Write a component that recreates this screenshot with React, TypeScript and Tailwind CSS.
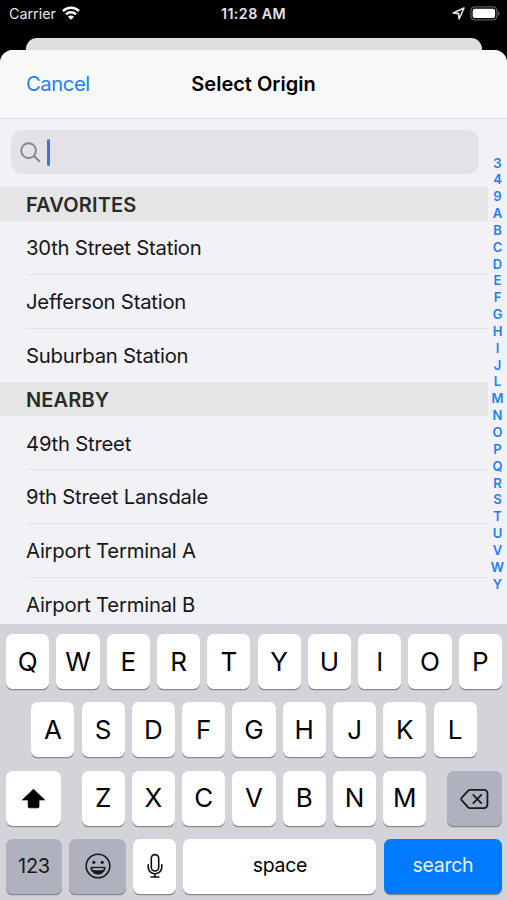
import type { ReactNode } from 'react'

interface Section {
  title: string
  stations: string[]
}

const sections: Section[] = [
  { title: 'FAVORITES', stations: ['30th Street Station', 'Jefferson Station', 'Suburban Station'] },
  { title: 'NEARBY', stations: ['49th Street', '9th Street Lansdale', 'Airport Terminal A', 'Airport Terminal B'] },
]

const indexLetters = '349ABCDEFGHIJLMNOPQRSTUVWY'.split('')

function StatusBar() {
  return (
    <div className="grid h-[28px] shrink-0 grid-cols-3 items-center pl-[9px] pr-[7px] text-[14.3px] text-[#e4e4e4]">
      <div className="flex items-center gap-[6px]">
        <span>Carrier</span>
        <svg width="18" height="14" viewBox="0 0 18 14" fill="none" stroke="#fff" strokeWidth="2.5" className="-mt-[2px]">
          <path d="M1 5.1a11.3 11.3 0 0 1 16 0" />
          <path d="M4 8.4a7.1 7.1 0 0 1 10 0" />
          <path d="M9 13.8 5.9 10.7a4.4 4.4 0 0 1 6.2 0z" fill="#fff" stroke="none" />
        </svg>
      </div>
      <div className="-ml-[2px] text-center text-[14.2px] font-semibold tracking-[0.45px]">11:28 AM</div>
      <div className="flex items-center justify-end gap-[5px]">
        <svg width="13" height="13" viewBox="0 0 13 13" fill="none" stroke="#e4e4e4" strokeWidth="1.6" strokeLinejoin="round" className="-mt-[1px]">
          <path d="M12 1 1.2 5.9l5.3.7.6 5.4z" />
        </svg>
        <svg width="30" height="15" viewBox="0 0 30 15" fill="none" className="-mt-[2px]">
          <rect x="0.9" y="0.9" width="26" height="13" rx="3.8" stroke="#5c5c5c" strokeWidth="1.3" />
          <rect x="2.7" y="2.7" width="22.4" height="9.4" rx="2.2" fill="#fff" />
          <path d="M28 5.2c2 .8 2 3.8 0 4.6z" fill="#5c5c5c" />
        </svg>
      </div>
    </div>
  )
}

function StationList() {
  return (
    <div className="w-[488px]">
      {sections.map((section) => (
        <section key={section.title}>
          <h2 className="flex h-[34px] items-center bg-[#e5e5e5] pl-[26px] pt-[2px] text-[20px] font-semibold tracking-[0.15px] text-[#2a2a2c]">
            {section.title}
          </h2>
          {section.stations.map((name, i) => (
            <div key={name} className="h-[53.8px] pl-[26px]">
              <div
                className={
                  i < section.stations.length - 1
                    ? 'flex h-full items-center border-b border-[#e1e1e6] pt-[2px]'
                    : 'flex h-full items-center pt-[1px]'
                }
              >
                <span className="text-[20.3px] tracking-[-0.22px] text-[#161618]">{name}</span>
              </div>
            </div>
          ))}
        </section>
      ))}
    </div>
  )
}

function LetterKey({ children }: { children: ReactNode }) {
  return (
    <div className="flex h-[55px] w-[43.2px] items-center justify-center rounded-[6.5px] bg-white pb-[1px] text-[26px] shadow-[0_1.3px_0_#898a8d]">
      {children}
    </div>
  )
}

function Letters({ letters }: { letters: string }) {
  return (
    <div className="flex justify-center gap-[7.1px]">
      {letters.split('').map((l) => (
        <LetterKey key={l}>{l}</LetterKey>
      ))}
    </div>
  )
}

function Keyboard() {
  return (
    <div className="flex h-[276px] shrink-0 flex-col gap-[13.3px] bg-[#d3d4da] pl-[6px] pr-[5px] pt-[10px] text-black">
      <Letters letters="QWERTYUIOP" />
      <Letters letters="ASDFGHJKL" />
      <div className="flex justify-between">
        <div className="flex h-[55px] w-[55px] items-center justify-center rounded-[6.5px] bg-white shadow-[0_1.3px_0_#898a8d]">
          <svg width="25" height="21" viewBox="0 0 25 21" className="mt-[1px]">
            <path
              d="M12.5 1.2 23.6 11.9H18v6.6a1.3 1.3 0 0 1-1.3 1.3H8.5a1.3 1.3 0 0 1-1.3-1.3v-6.6H1.4z"
              fill="#000"
              stroke="#000"
              strokeWidth="0.8"
              strokeLinejoin="round"
            />
          </svg>
        </div>
        <Letters letters="ZXCVBNM" />
        <div className="flex h-[55px] w-[55px] items-center justify-center rounded-[6.5px] bg-[#afb2be] shadow-[0_1.3px_0_#898a8d]">
          <svg width="29" height="22" viewBox="0 0 30 22" fill="none" stroke="#17181c" strokeWidth="1.8" strokeLinecap="round" strokeLinejoin="round" className="mt-[1px]">
            <path d="M10.2 1.6H25a3.4 3.4 0 0 1 3.4 3.4v12a3.4 3.4 0 0 1-3.4 3.4H10.2a2.4 2.4 0 0 1-1.7-.7l-6.6-7.2a2.2 2.2 0 0 1 0-3l6.6-7.2a2.4 2.4 0 0 1 1.7-.7z" />
            <path d="m13.8 6.7 8.2 8.6M22 6.7l-8.2 8.6" />
          </svg>
        </div>
      </div>
      <div className="flex h-[55px] gap-[7.4px] text-[19.5px]">
        <div className="flex w-[56px] items-center justify-center rounded-[6.5px] bg-[#afb2be] text-[20px] tracking-[-0.3px] text-[#17181c] shadow-[0_1.3px_0_#898a8d]">
          123
        </div>
        <div className="flex w-[56.6px] items-center justify-center rounded-[6.5px] bg-[#afb2be] shadow-[0_1.3px_0_#898a8d]">
          <svg width="26" height="26" viewBox="0 0 26 26" fill="none" stroke="#17181c" strokeWidth="1.6" className="ml-[1px]">
            <circle cx="13" cy="13" r="11.8" />
            <circle cx="8.8" cy="9.3" r="1.6" fill="#17181c" stroke="none" />
            <circle cx="17.2" cy="9.3" r="1.6" fill="#17181c" stroke="none" />
            <path d="M5.9 14.3h14.2c0 4.2-3.1 6.8-7.1 6.8s-7.1-2.6-7.1-6.8z" fill="#17181c" strokeWidth="1" strokeLinejoin="round" />
            <path d="M7 15.2h12q-.4 1.500-1.400 1.800-4.600.7-9.200 0-1-.3-1.400-1.800z" fill="#b9bcc7" stroke="none" />
          </svg>
        </div>
        <div className="flex w-[42.6px] items-center justify-center rounded-[6.5px] bg-white shadow-[0_1.3px_0_#898a8d]">
          <svg width="16" height="26" viewBox="0 0 16 26" fill="none" stroke="#111" strokeWidth="1.6" strokeLinecap="round">
            <rect x="4.3" y="1.6" width="7.4" height="16.4" rx="3.7" />
            <path d="M1.2 11.8v2.5a6.8 6.4 0 0 0 13.6 0v-2.5M8 20.7v3.2M4 24h8" />
          </svg>
        </div>
        <div className="flex w-[193px] items-center justify-center rounded-[6.5px] bg-white pb-[2px] tracking-[-0.3px] shadow-[0_1.3px_0_#898a8d]">
          space
        </div>
        <div className="flex flex-1 items-center justify-center rounded-[6.5px] bg-[#007aff] pb-[2px] tracking-[-0.3px] text-[#e8f3ff] shadow-[0_1.3px_0_#898a8d]">
          search
        </div>
      </div>
    </div>
  )
}

export default function App() {
  return (
    <div className="flex h-[900px] w-[507px] flex-col overflow-hidden bg-black font-['Inter',sans-serif]">
      <StatusBar />
      {/* Edge of the sheet underneath */}
      <div className="ml-[26px] mr-[25px] mt-[10px] h-[12px] shrink-0 rounded-t-[11px] bg-[#dfdfdf]" />
      <div className="flex h-[574px] shrink-0 flex-col overflow-hidden rounded-t-[13px] bg-[#f1f1f6]">
        <header className="grid h-[69px] shrink-0 grid-cols-[1fr_auto_1fr] items-center border-b border-[#dcdcde] bg-[#f8f8f8] px-[26px] text-[20px]">
          <button className="justify-self-start text-[20.3px] tracking-[-0.45px] text-[#1a80fb]">Cancel</button>
          <h1 className="font-semibold text-black">Select Origin</h1>
        </header>
        <div className="flex min-h-0 flex-1 justify-between">
          <div className="overflow-hidden">
            <div className="h-[68px] pl-[11px] pt-[11px]">
              <div className="flex h-[44px] w-[468px] items-center rounded-[12px] bg-[#e3e2e8] pl-[9px]">
                <svg width="21" height="21" viewBox="0 0 21 21" fill="none" stroke="#85858a" strokeWidth="1.9" strokeLinecap="round">
                  <circle cx="8.6" cy="8.6" r="7.4" />
                  <path d="m14 14 5.4 5.2" />
                </svg>
                <div className="ml-[6px] h-[27px] w-[2.6px] rounded-full bg-[#4a6ee0]" />
              </div>
            </div>
            <StationList />
          </div>
          <div className="flex w-[19px] flex-col items-center pt-[35.5px] text-[13px] font-semibold leading-[16.85px] text-[#1d80f5]">
            {indexLetters.map((l) => (
              <span key={l}>{l}</span>
            ))}
          </div>
        </div>
      </div>
      <Keyboard />
    </div>
  )
}
